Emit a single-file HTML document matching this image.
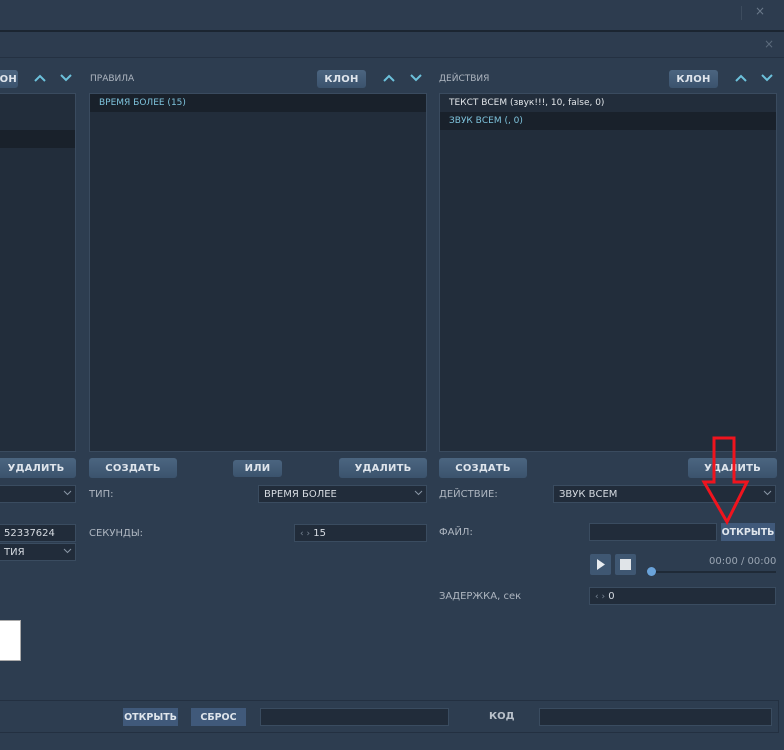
<!DOCTYPE html>
<html><head><meta charset="utf-8"><style>
*{box-sizing:border-box;margin:0;padding:0}
body{width:784px;height:750px;overflow:hidden;background:#2d3d50;font-family:"DejaVu Sans","Liberation Sans",sans-serif;color:#c6ccd4;position:relative}
.a{position:absolute}
.list{position:absolute;background:#222d3b;border:1px solid #3a4b5f}
.row{height:18px;font-size:9px;line-height:18px;padding-left:9px;white-space:nowrap}
.sel{background:#19212b;color:#7ec3dc}
.btn{position:absolute;height:20px;border-radius:3px;background:linear-gradient(#4b6580,#3b536d);color:#dfe5ec;font-weight:bold;font-size:10px;line-height:21px;text-align:center;letter-spacing:.2px}
.fbtn{position:absolute;height:18px;background:#40597a;color:#dfe5ec;font-weight:bold;font-size:9.5px;line-height:19px;text-align:center;white-space:nowrap;overflow:hidden}
.lbl{position:absolute;font-size:10px;color:#aeb6c0}
.inp{position:absolute;background:#212c3a;border:1px solid #3a4c60;height:18px;font-size:10px;line-height:17px;padding-left:5px;color:#d6dbe1}
.chev{position:absolute;right:3px;top:4px}
.ar{position:absolute}
</style></head><body>
<div class="a" style="left:0;top:0;width:784px;height:30px;background:#2d3c4f"></div>
<div class="a" style="left:741px;top:6px;width:1px;height:14px;background:#3d4c5e"></div>
<div class="a" style="left:755px;top:4px;font-size:12px;color:#6b7a8b">×</div>
<div class="a" style="left:0;top:30px;width:784px;height:2px;background:#1b2531"></div>
<div class="a" style="left:0;top:32px;width:784px;height:26px;background:#2d3c4f;border-bottom:1px solid #243142"></div>
<div class="a" style="left:764px;top:37px;font-size:12px;color:#5c6b7c">×</div>

<!-- headers -->
<div class="btn" style="left:-10px;top:70px;width:28px;height:18px;line-height:19px">ЛОН</div>
<svg class="ar" style="left:34px;top:74px" width="12" height="8"><path d="M1 7 L6 2 L11 7" fill="none" stroke="#6cc1db" stroke-width="2"/></svg>
<svg class="ar" style="left:60px;top:74px" width="12" height="8"><path d="M1 1 L6 6 L11 1" fill="none" stroke="#6cc1db" stroke-width="2"/></svg>
<div class="lbl" style="left:90px;top:74px;font-size:9px">ПРАВИЛА</div>
<div class="btn" style="left:317px;top:70px;width:49px;height:18px;line-height:19px">КЛОН</div>
<svg class="ar" style="left:383px;top:74px" width="12" height="8"><path d="M1 7 L6 2 L11 7" fill="none" stroke="#6cc1db" stroke-width="2"/></svg>
<svg class="ar" style="left:410px;top:74px" width="12" height="8"><path d="M1 1 L6 6 L11 1" fill="none" stroke="#6cc1db" stroke-width="2"/></svg>
<div class="lbl" style="left:439px;top:74px;font-size:9px">ДЕЙСТВИЯ</div>
<div class="btn" style="left:669px;top:70px;width:49px;height:18px;line-height:19px">КЛОН</div>
<svg class="ar" style="left:735px;top:74px" width="12" height="8"><path d="M1 7 L6 2 L11 7" fill="none" stroke="#6cc1db" stroke-width="2"/></svg>
<svg class="ar" style="left:761px;top:74px" width="12" height="8"><path d="M1 1 L6 6 L11 1" fill="none" stroke="#6cc1db" stroke-width="2"/></svg>

<!-- lists -->
<div class="list" style="left:-2px;top:93px;width:78px;height:359px"><div style="height:36px"></div><div class="row sel"></div></div>
<div class="list" style="left:89px;top:93px;width:338px;height:359px"><div class="row sel">ВРЕМЯ БОЛЕЕ (15)</div></div>
<div class="list" style="left:439px;top:93px;width:338px;height:359px"><div class="row" style="color:#e2e6ea">ТЕКСТ ВСЕМ (звук!!!, 10, false, 0)</div><div class="row sel">ЗВУК ВСЕМ (, 0)</div></div>

<!-- buttons row -->
<div class="btn" style="left:-4px;top:458px;width:80px">УДАЛИТЬ</div>
<div class="btn" style="left:89px;top:458px;width:88px">СОЗДАТЬ</div>
<div class="btn" style="left:233px;top:460px;width:49px;height:17px;line-height:18px">ИЛИ</div>
<div class="btn" style="left:339px;top:458px;width:88px">УДАЛИТЬ</div>
<div class="btn" style="left:439px;top:458px;width:88px">СОЗДАТЬ</div>
<div class="btn" style="left:688px;top:458px;width:89px">УДАЛИТЬ</div>

<!-- left fields -->
<div class="inp" style="left:-2px;top:485px;width:78px"><svg class="chev" width="9" height="6"><path d="M1 1 L4.5 4.5 L8 1" fill="none" stroke="#8996a5"/></svg></div>
<div class="inp" style="left:-2px;top:524px;width:78px">52337624</div>
<div class="inp" style="left:-2px;top:543px;width:78px">ТИЯ<svg class="chev" width="9" height="6"><path d="M1 1 L4.5 4.5 L8 1" fill="none" stroke="#8996a5"/></svg></div>
<div class="a" style="left:-2px;top:620px;width:23px;height:41px;background:#fff;border:1px solid #aaa"></div>

<!-- middle fields -->
<div class="lbl" style="left:89px;top:489px">ТИП:</div>
<div class="inp" style="left:258px;top:485px;width:169px">ВРЕМЯ БОЛЕЕ<svg class="chev" width="9" height="6"><path d="M1 1 L4.5 4.5 L8 1" fill="none" stroke="#8996a5"/></svg></div>
<div class="lbl" style="left:89px;top:528px">СЕКУНДЫ:</div>
<div class="inp" style="left:294px;top:524px;width:133px"><span style="color:#7a8796;font-size:9px">‹ ›</span>&nbsp;15</div>

<!-- right fields -->
<div class="lbl" style="left:439px;top:489px">ДЕЙСТВИЕ:</div>
<div class="inp" style="left:553px;top:485px;width:223px">ЗВУК ВСЕМ<svg class="chev" width="9" height="6"><path d="M1 1 L4.5 4.5 L8 1" fill="none" stroke="#8996a5"/></svg></div>
<div class="lbl" style="left:439px;top:527px">ФАЙЛ:</div>
<div class="inp" style="left:589px;top:523px;width:128px"></div>
<div class="fbtn" style="left:721px;top:523px;width:54px">ОТКРЫТЬ</div>
<div class="a" style="left:590px;top:554px;width:21px;height:21px;background:#3f5772;border-radius:2px"><svg width="21" height="21"><path d="M7 5 L15 10.5 L7 16Z" fill="#e8ecf0"/></svg></div>
<div class="a" style="left:615px;top:554px;width:21px;height:21px;background:#3f5772;border-radius:2px"><div style="margin:5px;width:11px;height:11px;background:#e0e4e8"></div></div>
<div class="lbl" style="left:709px;top:556px;color:#9aa5b2">00:00 / 00:00</div>
<div class="a" style="left:650px;top:571px;width:126px;height:2px;background:#1f2a37"></div>
<div class="a" style="left:647px;top:567px;width:9px;height:9px;border-radius:50%;background:#6aa3da"></div>
<div class="lbl" style="left:439px;top:591px">ЗАДЕРЖКА, сек</div>
<div class="inp" style="left:589px;top:587px;width:187px"><span style="color:#7a8796;font-size:9px">‹ ›</span>&nbsp;0</div>

<!-- red arrow -->
<svg class="a" style="left:700px;top:434px" width="52" height="92"><path d="M14 4 H34 V48 H47 L27 88 L4 48 H14 Z" fill="none" stroke="#f0141e" stroke-width="3"/></svg>

<!-- bottom bar -->
<div class="a" style="left:-2px;top:700px;width:781px;height:33px;border:1px solid #233041;background:#2d3d50"></div>
<div class="fbtn" style="left:123px;top:708px;width:55px">ОТКРЫТЬ</div>
<div class="fbtn" style="left:191px;top:708px;width:55px">СБРОС</div>
<div class="inp" style="left:260px;top:708px;width:189px"></div>
<div class="lbl" style="left:489px;top:711px;font-weight:bold;color:#b9c1ca">КОД</div>
<div class="inp" style="left:539px;top:708px;width:233px"></div>
</body></html>
